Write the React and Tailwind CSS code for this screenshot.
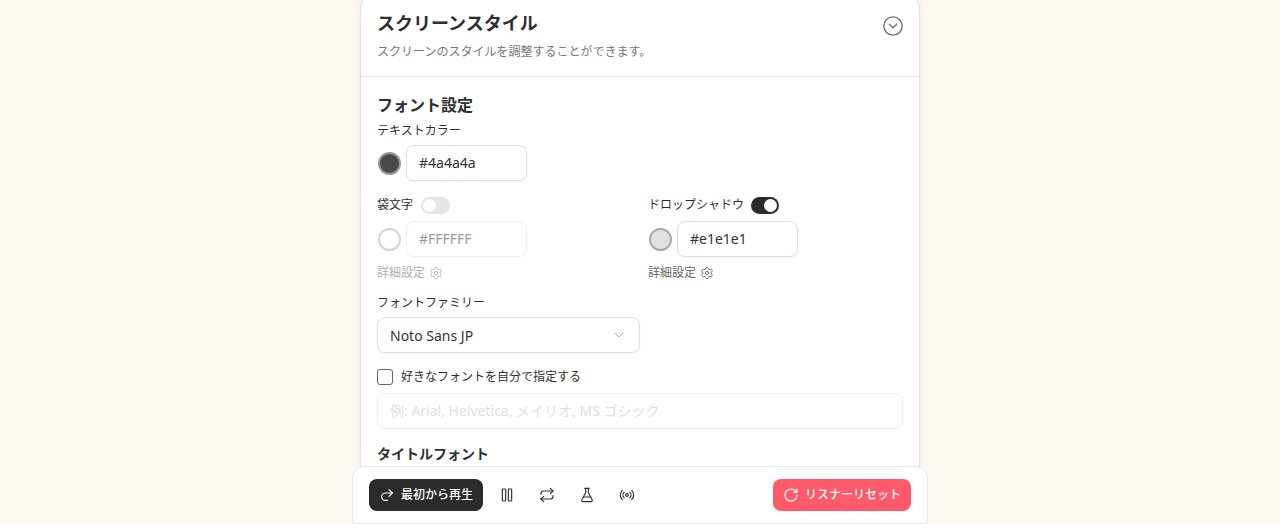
import React from "react";
import { ChevronDown, CircleChevronDown, FlaskConical, Pause, Radio, Redo2, Repeat, RotateCw, Settings } from "lucide-react";

function Toggle({ on }) {
    return (
        <span className={on ? "flex h-[17px] w-7 items-center justify-end rounded-full bg-[#2b2b2b] px-[2px]" : "flex h-[17px] w-[29px] items-center rounded-full bg-[#e5e5e5] px-[2px]"}>
            <span className="h-[13px] w-[13px] rounded-full bg-white"></span>
        </span>
    );
}

function ColorField({ swatch, value, disabled }) {
    return (
        <div className="flex items-center gap-[5px] pl-px">
            <span className={swatch}></span>
            <div className={disabled
                ? "flex h-9 w-[121px] items-center rounded-lg border border-[#eeeeee] bg-white pl-3 text-sm text-[#9a9a9a]"
                : "flex h-9 w-[121px] items-center rounded-lg border border-[#e0e0e0] bg-white pl-3 text-sm text-[#333333] shadow-[0_1px_2px_rgba(0,0,0,0.05)]"}>
                {value}
            </div>
        </div>
    );
}

export default function App() {
    return (
        <div className="relative h-[524px] overflow-hidden bg-[#fdf8f2] font-['Noto_Sans','Noto_Sans_CJK_JP',sans-serif] text-[#2f2f2f]">
            <div className="mx-auto -mt-2 h-[560px] w-[560px] rounded-2xl border border-[#e2e2e2] bg-white shadow-[0_2px_8px_rgba(0,0,0,0.07)]">
                <header className="flex h-[84px] justify-between border-b border-[#e5e5e5] px-4 pt-[16px]">
                    <div>
                        <h1 className="text-lg leading-[28px] font-bold">スクリーンスタイル</h1>
                        <p className="mt-px text-xs leading-[28px] text-[#777777]">スクリーンのスタイルを調整することができます。</p>
                    </div>
                    <CircleChevronDown className="mt-[6px] mr-[-1px] h-[22px] w-[22px] text-[#6f6f6f]" strokeWidth={1.5} />
                </header>

                <main className="px-4 pt-[16px]">
                    <h2 className="text-base leading-6 font-semibold">フォント設定</h2>
                    <p className="mt-[2px] text-xs leading-[24px]">テキストカラー</p>
                    <div className="mt-[2px]">
                        <ColorField value="#4a4a4a" swatch="h-[23px] w-[23px] rounded-full border-2 border-[#999999] bg-[#4a4a4a]" />
                    </div>

                    <div className="mt-[14px] grid grid-cols-[263px_1fr] gap-x-2">
                        <div>
                            <div className="flex h-[20px] items-center gap-2 text-xs">
                                <span>袋文字</span>
                                <Toggle />
                            </div>
                            <div className="mt-[6px]">
                                <ColorField disabled value="#FFFFFF" swatch="h-[23px] w-[23px] rounded-full border-2 border-[#d4d4d4] bg-white" />
                            </div>
                            <div className="mt-[7px] flex h-[18px] items-center gap-[4px] text-xs text-[#b0b0b0]">
                                <span>詳細設定</span>
                                <Settings className="h-[14px] w-[14px]" strokeWidth={1.5} />
                            </div>
                        </div>
                        <div>
                            <div className="flex h-[20px] items-center gap-[7px] text-xs">
                                <span>ドロップシャドウ</span>
                                <Toggle on />
                            </div>
                            <div className="mt-[6px]">
                                <ColorField value="#e1e1e1" swatch="h-[23px] w-[23px] rounded-full border-2 border-[#aaaaaa] bg-[#e1e1e1]" />
                            </div>
                            <div className="mt-[7px] flex h-[18px] items-center gap-[4px] text-xs text-[#666666]">
                                <span>詳細設定</span>
                                <Settings className="h-[14px] w-[14px]" strokeWidth={1.5} />
                            </div>
                        </div>
                    </div>

                    <p className="mt-[9px] text-xs leading-[24px]">フォントファミリー</p>
                    <div className="mt-[2px] flex h-9 w-[263px] items-center justify-between rounded-lg border border-[#e0e0e0] bg-white pr-3 pl-3 text-sm text-[#333333] shadow-[0_1px_2px_rgba(0,0,0,0.05)]">
                        <span className="pt-px">Noto Sans JP</span>
                        <ChevronDown className="h-4 w-4 text-[#aaaaaa]" strokeWidth={1.5} />
                    </div>

                    <label className="mt-4 flex h-4 items-center gap-2 text-xs">
                        <span className="h-4 w-4 rounded-[3px] border border-[#666666] bg-white"></span>
                        <span>好きなフォントを自分で指定する</span>
                    </label>

                    <div className="mt-2 flex h-9 items-center rounded-lg border border-[#eeeeee] bg-white pl-3 text-sm text-[#e0e0e0]">
                        例: Arial, Helvetica, メイリオ, MS ゴシック
                    </div>

                    <h2 className="mt-[13px] text-sm leading-6 font-semibold">タイトルフォント</h2>
                </main>
            </div>

            <footer className="absolute bottom-0 left-[352px] flex h-[58px] w-[576px] items-center justify-between rounded-t-xl border border-[#e8e8e8] bg-white px-4">
                <div className="flex items-center">
                    <button className="flex h-8 w-[114px] items-center justify-center gap-[6px] rounded-lg bg-[#2b2b2b] text-xs font-medium text-white">
                        <Redo2 className="h-4 w-4" strokeWidth={1.75} />
                        最初から再生
                    </button>
                    <div className="ml-[4px] flex text-[#333333]">
                        <span className="flex w-10 justify-center"><Pause className="h-4 w-4" strokeWidth={1.75} /></span>
                        <span className="flex w-10 justify-center"><Repeat className="h-4 w-4" strokeWidth={1.75} /></span>
                        <span className="flex w-10 justify-center"><FlaskConical className="h-4 w-4" strokeWidth={1.75} /></span>
                        <span className="flex w-10 justify-center"><Radio className="h-4 w-4" strokeWidth={1.75} /></span>
                    </div>
                </div>
                <button className="flex h-8 w-[138px] items-center justify-center gap-[6px] rounded-lg bg-[#ff5a6a] text-xs font-medium text-white">
                    <RotateCw className="h-4 w-4" strokeWidth={1.75} />
                    リスナーリセット
                </button>
            </footer>
        </div>
    );
}
